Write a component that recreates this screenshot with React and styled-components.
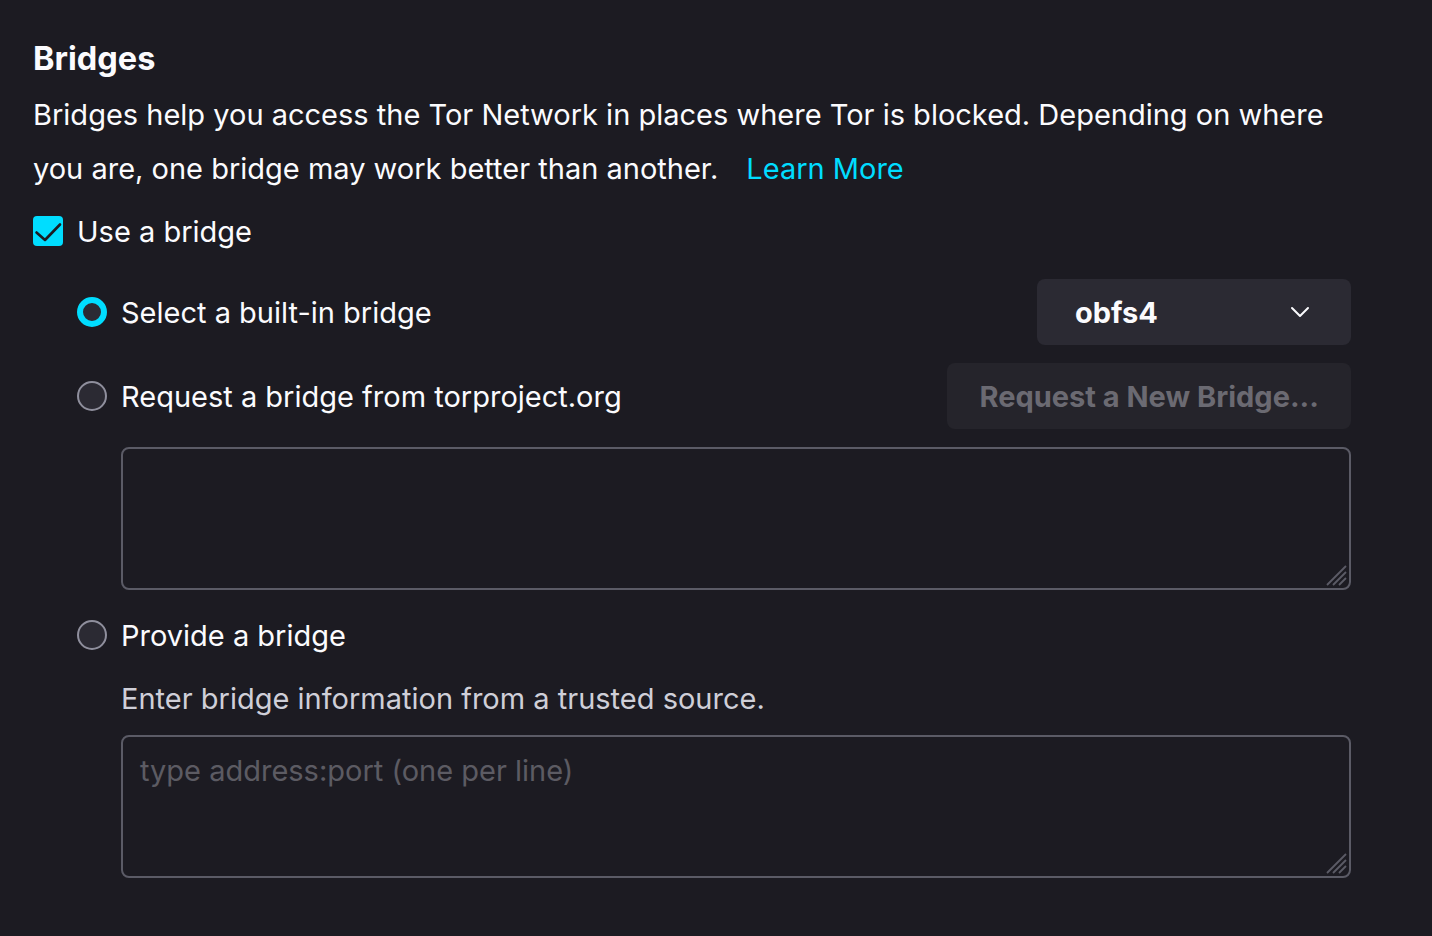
import React from 'react';
import styled, { createGlobalStyle } from 'styled-components';

const GlobalStyle = createGlobalStyle`
  html, body {
    margin: 0;
    padding: 0;
    background: #1c1b22;
    color-scheme: dark;
  }
  body {
    font-family: Inter, "Noto Sans", "Liberation Sans", sans-serif;
    color: #fbfbfe;
  }
`;

const Page = styled.div`
  min-height: 936px;
  box-sizing: border-box;
  padding: 38px 81px 0 33px;
  background: #1c1b22;
`;

const Heading = styled.h1`
  margin: 0;
  font-size: 32.5px;
  line-height: 42px;
  font-weight: 700;
`;

const Description = styled.p`
  margin: 8px 0 0;
  font-size: 29px;
  line-height: 54px;
  white-space: nowrap;
`;

const LearnMore = styled.a`
  margin-left: 28px;
  color: #00ddff;
  text-decoration: none;
`;

const CheckRow = styled.label`
  display: flex;
  align-items: center;
  gap: 14px;
  height: 40px;
  margin-top: 15px;
  font-size: 29px;
`;

const CheckBox = styled.span`
  width: 30px;
  height: 30px;
  border-radius: 4px;
  background: #00ddff;
  display: flex;
  align-items: center;
  justify-content: center;
`;

const Options = styled.div`
  margin: ${(p) => p.$top ?? 28}px 0 0 44px;
  display: flex;
  flex-direction: column;
`;

const OptionRow = styled.div`
  display: flex;
  align-items: center;
  justify-content: space-between;
  height: 66px;
  margin-top: ${(p) => p.$gap || 0}px;
`;

const RadioLabel = styled.label`
  display: flex;
  align-items: center;
  gap: 14px;
  font-size: 29px;
`;

const Radio = styled.span`
  width: 30px;
  height: 30px;
  box-sizing: border-box;
  border-radius: 50%;
  background: #2b2a33;
  border: ${(p) => (p.$checked ? '6px solid #00ddff' : '2px solid #8f8f9d')};
`;

const Select = styled.div`
  width: 314px;
  height: 66px;
  box-sizing: border-box;
  padding: 0 41px 0 38px;
  border-radius: 8px;
  background: #2b2a33;
  display: flex;
  align-items: center;
  justify-content: space-between;
  font-size: 29px;
  font-weight: 700;
`;

const RequestButton = styled.button`
  height: 66px;
  padding: 0 32px;
  border: none;
  border-radius: 8px;
  background: #25242b;
  color: #6b6a72;
  font-family: inherit;
  font-size: 29px;
  font-weight: 700;
`;

const Indented = styled.div`
  margin-left: 88px;
  margin-top: ${(p) => p.$gap || 0}px;
`;

const AreaWrap = styled.div`
  position: relative;
`;

const Area = styled.textarea`
  display: block;
  width: 100%;
  height: 143px;
  box-sizing: border-box;
  margin: 0;
  padding: 14px 17px;
  background: #1c1b22;
  border: 2px solid #5b5b66;
  border-radius: 8px;
  color: #fbfbfe;
  font-family: inherit;
  font-size: 29px;
  line-height: 40px;
  outline: none;
  resize: none;
  &::placeholder {
    color: #5c5b63;
  }
`;

const Grip = styled.svg`
  position: absolute;
  right: 3px;
  bottom: 3px;
  pointer-events: none;
`;

function TextBox({ placeholder }) {
  return (
    <AreaWrap>
      <Area placeholder={placeholder} readOnly={!placeholder} />
      <Grip width="26" height="26" viewBox="0 0 26 26">
        <path d="M24 5 L5 24 M24 11 L11 24 M24 17 L17 24" stroke="#5b5b66" strokeWidth="1.8" />
      </Grip>
    </AreaWrap>
  );
}

const Hint = styled.div`
  font-size: 29px;
  line-height: 40px;
  color: #cfcfd8;
  margin-bottom: 16px;
`;

export default function App() {
  return (
    <Page>
      <GlobalStyle />
      <Heading>Bridges</Heading>
      <Description>
        Bridges help you access the Tor Network in places where Tor is blocked. Depending on where
        <br />
        you are, one bridge may work better than another.
        <LearnMore href="#">Learn More</LearnMore>
      </Description>
      <CheckRow>
        <CheckBox>
          <svg width="30" height="30" viewBox="0 0 30 30" fill="none">
            <path d="M3.5 16.5 L12 24 L27 8.5" stroke="#1c1b22" strokeWidth="2.6" strokeLinecap="round" strokeLinejoin="round" />
          </svg>
        </CheckBox>
        Use a bridge
      </CheckRow>
      <Options>
        <OptionRow>
          <RadioLabel>
            <Radio $checked />
            Select a built-in bridge
          </RadioLabel>
          <Select>
            obfs4
            <svg width="20" height="12" viewBox="0 0 20 12" fill="none">
              <path d="M2 2 L10 10 L18 2" stroke="#fbfbfe" strokeWidth="2" strokeLinecap="round" strokeLinejoin="round" />
            </svg>
          </Select>
        </OptionRow>
        <OptionRow $gap={18}>
          <RadioLabel>
            <Radio />
            Request a bridge from torproject.org
          </RadioLabel>
          <RequestButton disabled>Request a New Bridge...</RequestButton>
        </OptionRow>
      </Options>
      <Indented $gap={18}>
        <TextBox />
      </Indented>
      <Options $top={0}>
        <OptionRow $gap={12}>
          <RadioLabel>
            <Radio />
            Provide a bridge
          </RadioLabel>
        </OptionRow>
      </Options>
      <Indented $gap={11}>
        <Hint>Enter bridge information from a trusted source.</Hint>
        <TextBox placeholder="type address:port (one per line)" />
      </Indented>
    </Page>
  );
}
